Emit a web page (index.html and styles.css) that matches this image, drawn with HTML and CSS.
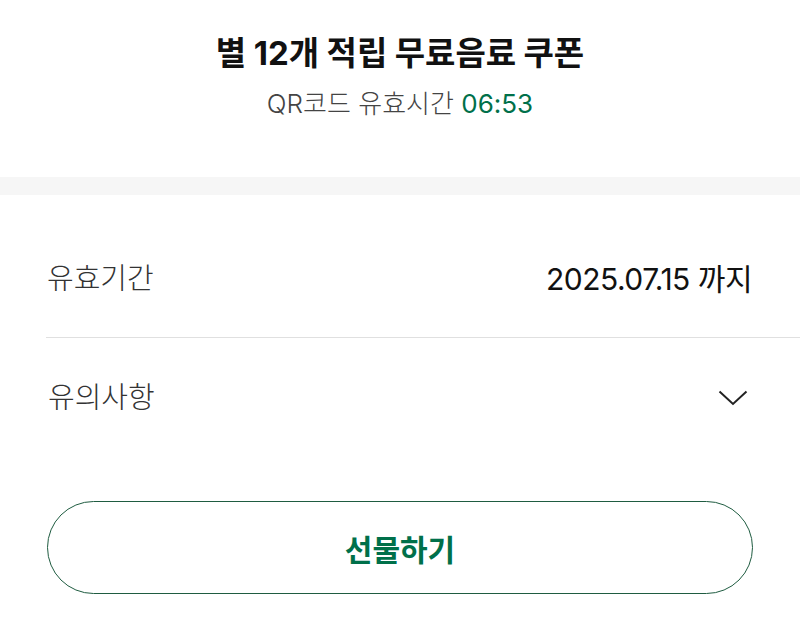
FILE: index.html
```html
<!DOCTYPE html>
<html lang="ko">
<head>
<meta charset="utf-8">
<link rel="stylesheet" href="styles.css">
</head>
<body>
<header class="head">
  <h1 class="title">별 12개 적립 무료음료 쿠폰</h1>
  <p class="sub">QR코드 유효시간 <span class="time">06:53</span></p>
</header>
<div class="band"></div>
<section class="info">
  <div class="row row-first">
    <span class="label">유효기간</span>
    <span class="value">2025.07.15 까지</span>
  </div>
  <div class="row row-second">
    <span class="label">유의사항</span>
    <svg class="chev" width="30" height="16" viewBox="0 0 30 16"><path d="M1.5 1.5 L15 14 L28.5 1.5" fill="none" stroke="#222" stroke-width="2"/></svg>
  </div>
</section>
<div class="actions">
  <button class="gift">선물하기</button>
</div>
</body>
</html>
```
FILE: styles.css
```css
html, body { margin: 0; padding: 0; background: #fff; }
body { font-family: Inter, "Noto Sans CJK KR", sans-serif; color: #111; width: 800px; }
.head { height: 177px; box-sizing: border-box; padding-top: 31px; text-align: center; }
.title { margin: 0; font-size: 33px; line-height: 44px; font-weight: 700; color: #111; letter-spacing: -0.1px; }
.sub { margin: 12px 0 0; font-size: 26px; line-height: 34px; font-weight: 300; color: #444; }
.time { color: #00704a; font-weight: 400; }
.band { height: 18px; background: #f6f6f6; }
.info { padding-left: 46px; }
.row { display: flex; justify-content: space-between; align-items: center; padding-right: 48px; }
.row-first { padding-top: 64px; padding-bottom: 38px; border-bottom: 1px solid #e0e0e0; }
.row-second { padding-top: 40px; padding-left: 1px; }
.label { font-size: 29px; line-height: 40px; font-weight: 300; color: #333; padding-left: 1px; }
.value { font-size: 30px; line-height: 40px; font-weight: 400; color: #111; letter-spacing: -0.5px; }
.chev { margin-right: 4px; }
.actions { padding: 83px 47px 0; }
.gift { display: block; width: 100%; height: 93px; border: 1.5px solid #1f5c41; border-radius: 47px; background: #fff; font-family: inherit; font-size: 30px; font-weight: 700; color: #00704a; }
```
